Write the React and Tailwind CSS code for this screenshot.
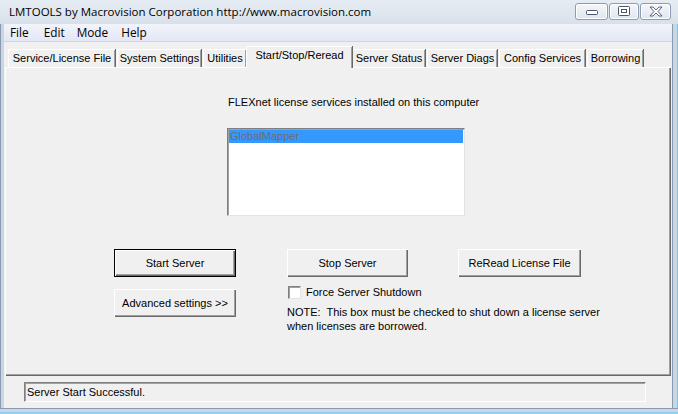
import React from "react";

const ui = { fontFamily: '"Liberation Sans", Arial, sans-serif' };

function TitleBtn({ children, w }) {
  return (
    <div
      className="h-[17px] rounded-[3px] border border-[#8d9cb2] bg-gradient-to-b from-[#f4f7fb] to-[#dfe6ef] flex items-center justify-center shadow-[inset_0_0_0_1px_#ffffff]"
      style={{ width: w }}
    >
      {children}
    </div>
  );
}

function Tab({ label, active, w }) {
  if (active) {
    return (
      <div
        className="relative z-10 h-[22px] -mb-[1px] -mx-[2px] border-t border-l border-white bg-[#f0f0f0] flex items-start pt-[2px] justify-center shadow-[1px_0_0_#696969,inset_-1px_0_0_#a0a0a0]"
        style={{ width: w }}
      >
        <span className="text-[11px] leading-[13px] text-black whitespace-nowrap">{label}</span>
      </div>
    );
  }
  return (
    <div
      className="h-[18px] border-t border-l border-white bg-[#f0f0f0] flex items-start pt-[2px] justify-center shadow-[1px_0_0_#696969,inset_-1px_0_0_#a0a0a0]"
      style={{ width: w }}
    >
      <span className="text-[11px] leading-[13px] text-black whitespace-nowrap">{label}</span>
    </div>
  );
}

function Btn({ label, w, def }) {
  return (
    <div
      className={
        "h-[28px] flex items-center justify-center bg-[#f0f0f0] text-[11px] text-black " +
        (def
          ? "border border-black shadow-[inset_1px_1px_0_#ffffff,inset_-1px_-1px_0_#696969,inset_-2px_-2px_0_#a0a0a0]"
          : "shadow-[inset_1px_1px_0_#ffffff,inset_-1px_-1px_0_#696969,inset_-2px_-2px_0_#a0a0a0]")
      }
      style={{ width: w }}
    >
      {label}
    </div>
  );
}

export default function App() {
  return (
    <div className="w-[678px] h-[414px] overflow-hidden bg-[#cfdbe8] flex flex-col" style={ui}>
      {/* Title bar */}
      <div className="h-[24px] flex items-center bg-gradient-to-b from-[#e6ecf3] to-[#d8e1eb] pl-[9px] pr-[7px]">
        <span className="text-[11.5px] text-black" style={{ fontFamily: '"Open Sans", "Noto Sans", sans-serif' }}>
          LMTOOLS by Macrovision Corporation http://www.macrovision.com
        </span>
        <div className="ml-auto flex gap-[1px] items-center mt-[-2px]">
          <TitleBtn w={33}>
            <svg width="14" height="8" viewBox="0 0 14 8">
              <rect x="1.5" y="3.5" width="11" height="4" rx="1" fill="#fff" stroke="#4a5568" />
            </svg>
          </TitleBtn>
          <TitleBtn w={30}>
            <svg width="12" height="10" viewBox="0 0 12 10">
              <rect x="0.5" y="0.5" width="11" height="9" rx="1" fill="#fff" stroke="#4a5568" />
              <rect x="3.5" y="3.5" width="5" height="3" fill="none" stroke="#4a5568" />
            </svg>
          </TitleBtn>
          <TitleBtn w={31}>
            <svg width="14" height="11" viewBox="0 0 14 11">
              <path d="M1 1 H4 L7 4 L10 1 H13 L9 5.5 L13 10 H10 L7 7 L4 10 H1 L5 5.5 Z" fill="#fff" stroke="#4a5568" strokeWidth="0.9" strokeLinejoin="round" />
            </svg>
          </TitleBtn>
        </div>
      </div>

      {/* Body */}
      <div className="flex-1 flex">
        <div className="w-[4px] bg-[#c9d6e4] border-l border-[#8a9bb0]" />
        <div className="flex-1 flex flex-col bg-[#f0f0f0]">
          {/* Menu bar */}
          <div className="h-[18px] flex items-center bg-gradient-to-b from-[#f3f4fb] to-[#e3e6f5] border-b border-[#d0d4e4] text-[11.8px] text-black" style={{ fontFamily: '"Open Sans", "Noto Sans", sans-serif' }}>
            <span className="ml-[6px]">File</span>
            <span className="ml-[15px]">Edit</span>
            <span className="ml-[12px]">Mode</span>
            <span className="ml-[13px]">Help</span>
          </div>

          {/* Tabs */}
          <div className="flex items-end h-[25px] pl-[4px] pr-[2px]">
            <div className="flex items-end gap-[2px]">
              <Tab label="Service/License File" w={107} />
              <Tab label="System Settings" w={84} />
              <Tab label="Utilities" w={43} />
              <Tab label="Start/Stop/Reread" w={106} active />
              <Tab label="Server Status" w={73} />
              <Tab label="Server Diags" w={70} />
              <Tab label="Config Services" w={86} />
              <Tab label="Borrowing" w={56} />
            </div>
          </div>

          {/* Panel */}
          <div className="ml-[1px] mr-[2px] h-[308px] border-t border-l border-white shadow-[1px_1px_0_#696969,inset_-1px_-1px_0_#a0a0a0] flex flex-col">
            <div className="mt-[28px] ml-[222px] text-[11px] leading-[13px] text-black">
              FLEXnet license services installed on this computer
            </div>
            <div className="mt-[19px] ml-[221px] w-[238px] h-[88px] bg-white border-t border-l border-[#808080] shadow-[inset_1px_1px_0_#a0a0a0] border-r border-b border-r-[#e3e3e3] border-b-[#e3e3e3] p-[1px]">
              <div className="h-[13px] bg-[#3399ff] text-[11px] leading-[13px] text-[#6d6d6d] pl-[1px]">GlobalMapper</div>
            </div>
            <div className="mt-[33px] flex">
              <div className="ml-[108px] flex flex-col gap-[12px]">
                <Btn label="Start Server" w={122} def />
                <Btn label="Advanced settings >>" w={122} />
              </div>
              <div className="ml-[51px] flex flex-col">
                <div className="flex gap-[50px]">
                  <Btn label="Stop Server" w={121} />
                  <Btn label="ReRead License File" w={123} />
                </div>
                <div className="mt-[9px] flex items-center ml-[1px]">
                  <div className="w-[13px] h-[13px] bg-white border-t border-l border-[#808080] border-r border-b border-r-[#e3e3e3] border-b-[#e3e3e3] shadow-[inset_1px_1px_0_#a0a0a0]" />
                  <span className="ml-[5px] text-[11px] leading-[13px] text-black">Force Server Shutdown</span>
                </div>
                <div className="mt-[6px] text-[11px] leading-[14px] text-black">
                  NOTE:&nbsp; This box must be checked to shut down a license server
                  <br />
                  when licenses are borrowed.
                </div>
              </div>
            </div>
          </div>

          {/* Status */}
          <div className="mt-[7px] ml-[20px] w-[622px] h-[20px] border-t border-l border-[#808080] border-r border-b border-r-white border-b-white shadow-[inset_1px_1px_0_#a0a0a0] flex items-center pl-[2px] text-[11px] text-black">
            Server Start Successful.
          </div>
          <div className="flex-1" />
        </div>
        <div className="w-[6px] bg-[#c9d6e4] border-l border-[#8a9bb0] border-r border-r-[#7fc3e8]" />
      </div>
      <div className="h-[6px] bg-[#c9d6e4] border-t border-[#8a9bb0] border-b-2 border-b-[#8fd0f0]" />
    </div>
  );
}
